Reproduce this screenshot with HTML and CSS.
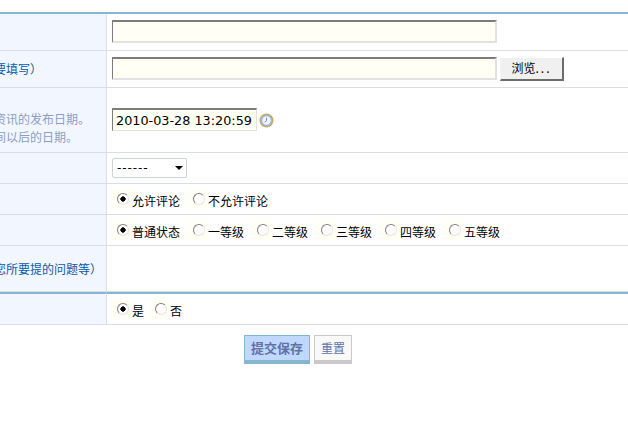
FILE: index.html
```html
<!DOCTYPE html>
<html lang="zh-CN">
<head>
<meta charset="utf-8">
<title>资讯发布</title>
<link rel="stylesheet" href="styles.css">
</head>
<body>
<form class="form">
  <table class="sheet">
    <tr class="row-title">
      <th></th>
      <td><div class="inline"><input class="field" type="text"></div></td>
    </tr>
    <tr class="row-title">
      <th><span class="label">标题图片地址（需要填写）</span></th>
      <td><div class="inline"><input class="field" type="text"><button class="browse" type="button">浏览<span class="dots">...</span></button></div></td>
    </tr>
    <tr class="row-date">
      <th><span class="hint">您可以修改这一条资讯的发布日期。<br>但不能选择当前时间以后的日期。</span></th>
      <td>
        <div class="inline">
          <input class="date" type="text" value="2010-03-28 13:20:59">
          <svg class="clock" viewBox="0 0 15 15" width="15" height="15" aria-hidden="true">
            <circle cx="7.5" cy="7.5" r="7" fill="#c2a76e"/>
            <circle cx="7.5" cy="7.5" r="5.6" fill="#9dbbe6"/>
            <circle cx="7.5" cy="7.5" r="4.2" fill="#f2f6fc"/>
            <path d="M7.5 4.6V7.8L5.6 9" fill="none" stroke="#6f8fc4" stroke-width="1"/>
          </svg>
        </div>
      </td>
    </tr>
    <tr class="row-select">
      <th></th>
      <td><span class="select"><span class="select-text">------</span><i class="caret"></i></span></td>
    </tr>
    <tr class="row-radio">
      <th></th>
      <td>
        <div class="radios">
          <label class="opt wide"><span class="box"><input type="radio" name="c" checked></span><span class="txt">允许评论</span></label>
          <label class="opt"><span class="box"><input type="radio" name="c"></span><span class="txt">不允许评论</span></label>
        </div>
      </td>
    </tr>
    <tr class="row-radio">
      <th></th>
      <td>
        <div class="radios">
          <label class="opt wide"><span class="box"><input type="radio" name="l" checked></span><span class="txt">普通状态</span></label>
          <label class="opt level"><span class="box"><input type="radio" name="l"></span><span class="txt">一等级</span></label>
          <label class="opt level"><span class="box"><input type="radio" name="l"></span><span class="txt">二等级</span></label>
          <label class="opt level"><span class="box"><input type="radio" name="l"></span><span class="txt">三等级</span></label>
          <label class="opt level"><span class="box"><input type="radio" name="l"></span><span class="txt">四等级</span></label>
          <label class="opt level"><span class="box"><input type="radio" name="l"></span><span class="txt">五等级</span></label>
        </div>
      </td>
    </tr>
    <tr class="row-note">
      <th><span class="label">评论内容（这里写您所要提的问题等）</span></th>
      <td></td>
    </tr>
    <tr class="row-radio last-group">
      <th></th>
      <td>
        <div class="radios">
          <label class="opt short"><span class="box"><input type="radio" name="y" checked></span><span class="txt">是</span></label>
          <label class="opt"><span class="box"><input type="radio" name="y"></span><span class="txt">否</span></label>
        </div>
      </td>
    </tr>
  </table>
  <div class="actions">
    <button class="btn primary" type="button">提交保存</button>
    <button class="btn plain" type="reset">重置</button>
  </div>
</form>
</body>
</html>
```
FILE: styles.css
```css
html, body {
  margin: 0;
  padding: 0;
  height: 100%;
  overflow: hidden;
  background: #fff;
}
body {
  font: 12px/18px "Noto Sans CJK SC", "Liberation Sans", sans-serif;
  color: #000;
}
.form {
  margin-left: -111px;
  padding-top: 12px;
}
.sheet {
  width: 740px;
  table-layout: fixed;
  border-collapse: separate;
  border-spacing: 0;
  border-top: 2px solid #84b6d4;
}
.sheet th {
  width: 218px;
  padding: 0 0 0 9px;
  box-sizing: border-box;
  background: #f2f7ff;
  border-right: 1px solid #d8e0ea;
  border-bottom: 1px solid #d8dde6;
  font-weight: normal;
  text-align: left;
  white-space: nowrap;
}
.sheet td {
  padding: 0 0 0 5px;
  border-bottom: 1px solid #d8dde6;
  vertical-align: middle;
}
.row-title th, .row-title td { height: 36px; }
.row-date th, .row-date td { height: 64px; }
.row-select th, .row-select td { height: 30px; }
.row-radio th, .row-radio td { height: 30px; }
.row-note th, .row-note td { height: 45px; }
.last-group th, .last-group td { border-top: 2px solid #84b6d4; height: 30px; }
.label { color: #0b5aa8; }
.hint {
  display: block;
  margin-top: 16px;
  color: #8f9dc6;
}
.inline {
  display: flex;
  align-items: flex-start;
  margin-bottom: 1px;
  white-space: nowrap;
}
.field {
  display: block;
  flex: none;
  width: 385px;
  height: 23px;
  box-sizing: border-box;
  padding: 0;
  background: #fffff5;
  border-style: solid;
  border-width: 2px 2px 2px 1px;
  border-color: #7c7c7c #e2e2e2 #e2e2e2 #7c7c7c;
}
.browse {
  flex: none;
  width: 64px;
  height: 24px;
  margin-left: 3px;
  padding: 0;
  font: 12px/18px "Noto Sans CJK SC", sans-serif;
  background: #f0f0f0;
  border-style: solid;
  border-width: 1px 2px 2px 1px;
  border-color: #fff #6c6c6c #6c6c6c #f4f4f4;
  color: #000;
}
.dots { letter-spacing: 2px; }
.date {
  flex: none;
  box-sizing: border-box;
  width: 145px;
  height: 23px;
  padding: 0 0 0 3px;
  font: 12.8px "DejaVu Sans", sans-serif;
  background: #fffff5;
  border-style: solid;
  border-width: 2px 1px 1px 1px;
  border-color: #7c7c7c #e2e2e2 #e2e2e2 #7c7c7c;
}
.clock {
  flex: none;
  margin: 5px 0 0 2px;
}
.select {
  display: flex;
  align-items: center;
  justify-content: space-between;
  box-sizing: border-box;
  width: 75px;
  height: 20px;
  padding: 0 3px 0 4px;
  border: 1px solid #cfd3d8;
  border-radius: 2px;
  background: #fff;
  font: 12px "DejaVu Sans", sans-serif;
}
.select-text { letter-spacing: 0.9px; }
.caret {
  width: 0;
  height: 0;
  border-style: solid;
  border-width: 4px 4px 0;
  border-color: #000 transparent transparent;
}
.radios {
  display: flex;
  white-space: nowrap;
}
.opt {
  display: flex;
  align-items: center;
  flex: none;
}
.opt.wide { width: 76px; }
.opt.level { width: 64px; }
.opt.short { width: 38px; }
.box {
  display: flex;
  align-items: center;
  flex: none;
  box-sizing: border-box;
  width: 20px;
  height: 20px;
  padding-left: 5px;
  background: #fffff5;
}
.txt { padding-top: 4px; }
.box input {
  appearance: none;
  flex: none;
  box-sizing: border-box;
  width: 12px;
  height: 12px;
  margin: 0;
  border-radius: 50%;
  border: 1px solid;
  border-color: #7f7f7f #e4e4e4 #e4e4e4 #7f7f7f;
  background: #fff;
}
.box input:checked {
  background: radial-gradient(circle, #000 0, #000 2.4px, #fff 2.9px);
}
.actions {
  display: flex;
  justify-content: center;
  gap: 4px;
  width: 596px;
  padding: 10px 0 0 111px;
}
.btn {
  height: 29px;
  padding: 0;
  font: 12px/18px "Noto Sans CJK SC", sans-serif;
  color: #6272a8;
  border-style: solid;
  border-width: 1px 1px 4px;
}
.primary {
  width: 66px;
  background: #c0d8fc;
  border-color: #84b6d4;
  font-size: 13px;
  font-weight: bold;
}
.plain {
  width: 38px;
  background: #f9f9f9;
  border-color: #c9c9c9;
}
```
